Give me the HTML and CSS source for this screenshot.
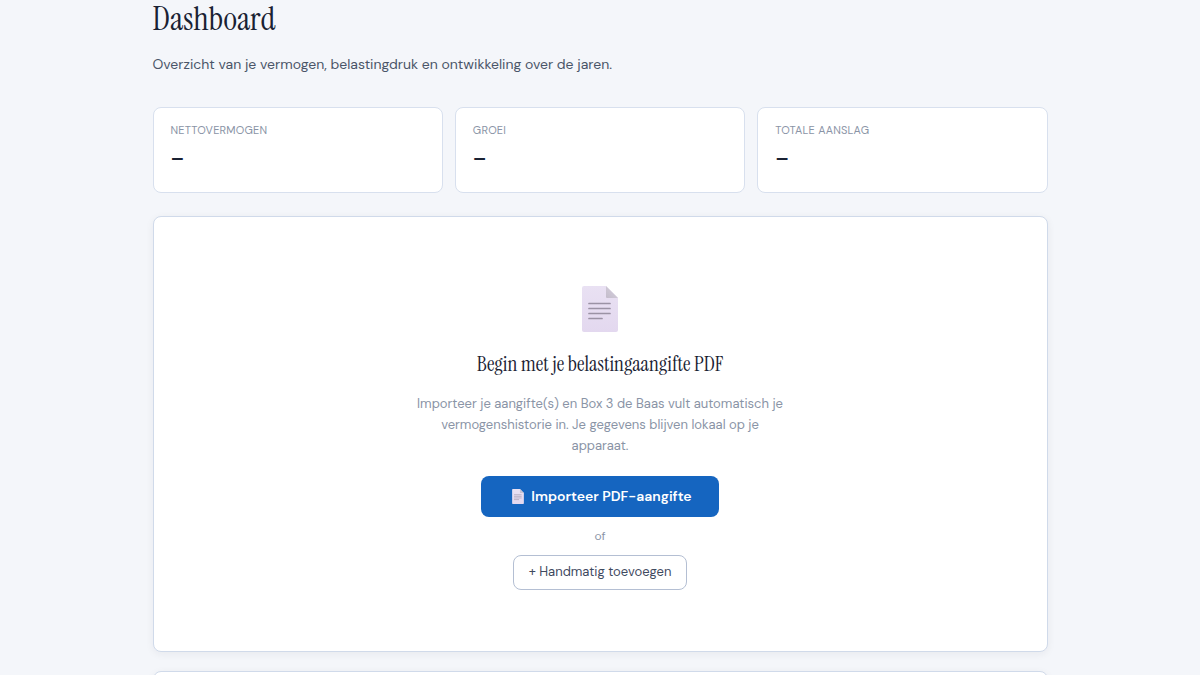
FILE: index.html
```html
<!DOCTYPE html>
<html lang="nl">
<head>
    <meta charset="UTF-8">
    <meta name="viewport" content="width=device-width, initial-scale=1.0">
    <title>Dashboard</title>
    <link rel="stylesheet" href="styles.css">
</head>
<body>

    <!-- document icon, used large and inside the import button -->
    <svg class="sprite" aria-hidden="true">
        <defs>
            <linearGradient id="paper" x1="0" y1="0" x2="0" y2="1">
                <stop offset="0" stop-color="#e9e1f3"/>
                <stop offset="1" stop-color="#e3d8ef"/>
            </linearGradient>
            <linearGradient id="fold" x1="1" y1="0" x2="0" y2="1">
                <stop offset="0" stop-color="#d9d3df"/>
                <stop offset="1" stop-color="#c3bccb"/>
            </linearGradient>
        </defs>
        <symbol id="doc" viewBox="0 0 36 46">
            <path d="M2 0H24L36 12V44a2 2 0 0 1-2 2H2a2 2 0 0 1-2-2V2a2 2 0 0 1 2-2z" fill="url(#paper)"/>
            <path d="M24 0L36 12H25a1 1 0 0 1-1-1z" fill="url(#fold)"/>
            <path d="M7 17.500H28M7 22.500H28M7 27.500H28M7 32.500H20" stroke="#9b92a5" stroke-width="1.700" stroke-linecap="round"/>
        </symbol>
    </svg>

    <main class="page">
        <h1 class="page-title">Dashboard</h1>
        <p class="page-sub">Overzicht van je vermogen, belastingdruk en ontwikkeling over de jaren.</p>

        <div class="stats">
            <div class="stat">
                <div class="stat-label">Nettovermogen</div>
                <div class="stat-value">–</div>
            </div>
            <div class="stat">
                <div class="stat-label">Groei</div>
                <div class="stat-value">–</div>
            </div>
            <div class="stat">
                <div class="stat-label">Totale aanslag</div>
                <div class="stat-value">–</div>
            </div>
        </div>

        <section class="card empty">
            <svg class="empty-icon" aria-hidden="true"><use href="#doc"/></svg>
            <h2 class="empty-title">Begin met je belastingaangifte PDF</h2>
            <p class="empty-text">Importeer je aangifte(s) en Box 3 de Baas vult automatisch je vermogenshistorie in. Je gegevens blijven lokaal op je apparaat.</p>
            <button class="btn btn-primary" type="button">
                <svg class="btn-icon" aria-hidden="true"><use href="#doc"/></svg>
                Importeer PDF-aangifte
            </button>
            <span class="or">of</span>
            <button class="btn btn-outline" type="button">+ Handmatig toevoegen</button>
        </section>

        <section class="card next"></section>
    </main>

</body>
</html>
```
FILE: styles.css
```css
* {
    box-sizing: border-box;
}

body {
    margin: 0;
    background-color: #f4f6fa;
    color: #1a2233;
    font-family: "DM Sans", Inter, sans-serif;
}

.sprite {
    position: absolute;
    width: 0;
    height: 0;
}

.page {
    max-width: 959px;
    margin: 0 auto;
    padding: 0 32px;
}

.page-title {
    margin: 0;
    font-family: "Instrument Serif", "Liberation Serif", serif;
    font-size: 33px;
    font-weight: 400;
    line-height: 38px;
}

.page-sub {
    margin: 14px 0 31px;
    color: #4a5568;
    font-size: 14px;
    line-height: 24px;
}

.stats {
    display: grid;
    grid-template-columns: repeat(3, 1fr);
    gap: 12px;
    margin-bottom: 23px;
}

.stat {
    background-color: #fff;
    border: 1px solid #d8e0ee;
    border-radius: 8px;
    padding: 13px 17px 20px;
}

.stat-label {
    color: #8a94a6;
    font-size: 11px;
    letter-spacing: 0.02em;
    line-height: 18px;
    text-transform: uppercase;
}

.stat-value {
    margin-top: 5px;
    font-size: 20px;
    font-weight: 600;
    line-height: 28px;
}

.card {
    background-color: #fff;
    border: 1px solid #d0daea;
    border-radius: 8px;
    box-shadow: 0 2px 8px rgba(26, 34, 51, 0.06);
}

.empty {
    display: flex;
    flex-direction: column;
    align-items: center;
    margin-bottom: 19px;
    padding: 69px 24px 61px;
    text-align: center;
}

.empty-icon {
    width: 36px;
    height: 46px;
}

.empty-title {
    margin: 18px 0 15px;
    font-family: "Instrument Serif", "Liberation Serif", serif;
    font-size: 21px;
    font-weight: 400;
    line-height: 28px;
}

.empty-text {
    max-width: 374px;
    margin: 0 0 20px;
    color: #8a94a6;
    font-size: 13px;
    line-height: 21px;
}

.btn {
    border-radius: 8px;
    font-family: inherit;
    cursor: pointer;
}

.btn-primary {
    display: flex;
    align-items: center;
    gap: 7px;
    padding: 10px 27px 11px 31px;
    border: none;
    background-color: #1565c0;
    color: #fff;
    font-size: 14px;
    font-weight: 600;
    line-height: 20px;
}

.btn-icon {
    width: 12px;
    height: 15px;
}

.or {
    margin: 10px 0;
    color: #8a94a6;
    font-size: 12px;
    line-height: 18px;
}

.btn-outline {
    padding: 6px 15px 7px;
    border: 1px solid #b4bfd3;
    background-color: #fff;
    color: #3f4a5f;
    font-size: 13px;
    line-height: 20px;
}

.next {
    min-height: 160px;
}
```
